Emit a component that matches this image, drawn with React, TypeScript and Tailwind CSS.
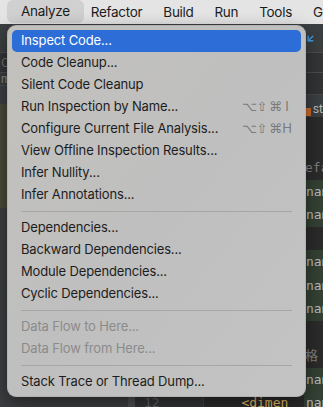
import { ArrowDownLeft } from 'lucide-react';

type Item = { label: string; keys?: string[]; active?: boolean; disabled?: boolean };

// ── Analyze menu contents ────────────────────────────────
const GROUPS: Item[][] = [
  [
    { label: 'Inspect Code...', active: true },
    { label: 'Code Cleanup...' },
    { label: 'Silent Code Cleanup' },
    { label: 'Run Inspection by Name...', keys: ['⌥', '⇧', '⌘', 'I'] },
    { label: 'Configure Current File Analysis...', keys: ['⌥', '⇧', '⌘', 'H'] },
    { label: 'View Offline Inspection Results...' },
    { label: 'Infer Nullity...' },
    { label: 'Infer Annotations...' },
  ],
  [
    { label: 'Dependencies...' },
    { label: 'Backward Dependencies...' },
    { label: 'Module Dependencies...' },
    { label: 'Cyclic Dependencies...' },
  ],
  [
    { label: 'Data Flow to Here...', disabled: true },
    { label: 'Data Flow from Here...', disabled: true },
  ],
  [{ label: 'Stack Trace or Thread Dump...' }],
];

const MENUBAR = ['Refactor', 'Build', 'Run', 'Tools', 'Git'];

// editor lines visible to the right of the menu
const CODE: { pre?: string; text: string; kind: 'comment' | 'attr' | 'blank' }[] = [
  { text: 'efault -->', kind: 'comment' },
  { text: 'name="a"', kind: 'attr' },
  { text: 'name="b"', kind: 'attr' },
  { text: '', kind: 'blank' },
  { text: 'name="c"', kind: 'attr' },
  { text: 'name="d"', kind: 'attr' },
  { text: 'name="e"', kind: 'attr' },
  { text: '', kind: 'blank' },
  { text: '格 -->', kind: 'comment' },
  { text: 'name="f"', kind: 'attr' },
  { pre: '<dimen\u00a0\u00a0', text: 'name="g"', kind: 'attr' },
];

function Shortcut({ keys }: { keys: string[] }) {
  return (
    <div className="flex items-center text-[#7a7a7a] tracking-normal">
      <span className="w-[13px] text-center text-[13px] font-['DejaVu_Sans',sans-serif]">{keys[0]}</span>
      <span className="w-[14px] text-center text-[13px] font-['DejaVu_Sans',sans-serif]">{keys[1]}</span>
      <span className="w-[12px] text-center text-[13px] font-['DejaVu_Sans',sans-serif]">{keys[2]}</span>
      <span className="w-[12px] text-center text-[13px]">{keys[3]}</span>
    </div>
  );
}

function MenuRow({ item }: { item: Item }) {
  return (
    <div
      className={`h-[22px] flex items-center justify-between pl-[9px] pr-[8px] rounded-[5px] text-[13px] tracking-[-0.15px]
        ${item.active ? 'bg-[#2c6dd7] text-white' : item.disabled ? 'text-[#8b8b8b]' : 'text-[#1d1d1d]'}`}
    >
      <span>{item.label}</span>
      {item.keys && <Shortcut keys={item.keys} />}
    </div>
  );
}

export default function App() {
  return (
    <div className="relative w-[323px] h-[407px] overflow-hidden flex flex-col bg-[#2b2b2b] font-['Inter','Liberation_Sans',sans-serif]">
      {/* macOS menu bar */}
      <div className="h-[24px] shrink-0 bg-[#e4e4e4] flex items-center pl-[21px] gap-[21px] text-[13.5px] tracking-[-0.3px] text-[#1c1c1c]">
        <span className="-mx-[14px] px-[14px] h-[23px] self-start flex items-center rounded-[6px] bg-[#d0d0d0]">Analyze</span>
        {MENUBAR.map(m => (
          <span key={m}>{m}</span>
        ))}
      </div>

      {/* IDE toolbar */}
      <div className="h-[29px] shrink-0 bg-[#3c3f41] border-b border-[#4b4d4f] flex items-center justify-end pr-[7px]">
        <ArrowDownLeft className="w-[11px] h-[11px] text-[#3e9ee6]" strokeWidth={3} />
      </div>
      <div className="h-[20px] shrink-0 bg-[#333537] border-b border-[#4b4d4f] flex items-center pl-[1px] text-[12px] text-[#6f7173]">
        C
      </div>

      {/* Workspace */}
      <div className="flex-1 flex min-h-0">
        {/* project panel */}
        <div className="w-[128px] flex flex-col">
          <div className="h-[13px] bg-[#3a3c3e] border-b border-[#4b4d4f] text-[11px] leading-[12px] text-[#8c8e90] pl-[1px]">m</div>
          <div className="h-[18px] bg-[#3c3f41]" />
          <div className="h-[104px] bg-[#4a4939]" />
          <div className="flex-1 bg-[#3c3e41]" />
        </div>
        <div className="w-[7px] bg-[#4d4f51]" />

        {/* gutter */}
        <div className="w-[69px] bg-[#313335] border-r border-[#3f4143] flex flex-col justify-end">
          <div className="h-[16px] pl-[9px] text-[13px] leading-[23px] text-[#606366] font-['DejaVu_Sans_Mono',monospace]">12</div>
        </div>

        {/* editor */}
        <div className="flex-1 flex flex-col min-w-0">
          <div className="h-[22px] shrink-0 bg-[#313335] border-b border-[#45474a]" />
          <div className="h-[22px] shrink-0 bg-[#3c3f41] flex items-end justify-end">
            <div className="w-[17px] h-[16px] flex items-center gap-[2px]">
              <span className="w-[5px] h-[8px] bg-[#cc6a2a] mt-[6px]" />
              <span className="text-[12px] text-[#bbbbbb]">st</span>
            </div>
          </div>
          <div className="flex-1 bg-[#2b2b2b] pt-[39px] font-['DejaVu_Sans_Mono','Noto_Sans_CJK_SC',monospace] text-[13px]">
            {CODE.map((line, i) => (
              <div key={i} className="h-[23.5px] flex items-center whitespace-nowrap">
                <span className="w-[100px] shrink-0 text-right text-[#e8bf6a]">{line.pre ?? ''}</span>
                {line.kind === 'attr' && (
                  <span className="flex-1 h-full flex items-center pl-[2px] bg-[#344134] text-[#bababa]">{line.text}</span>
                )}
                {line.kind === 'comment' && (
                  <span className="flex-1 h-full flex items-center pl-[1px] text-[#808080]">{line.text}</span>
                )}
              </div>
            ))}
          </div>
        </div>
      </div>

      {/* Analyze dropdown */}
      <div className="absolute left-[7px] top-[25px] w-[299px] h-[372px] rounded-[9px] bg-gradient-to-br from-[#c2c1bd] via-[#bfbfbf] to-[#c3c3c3] border border-[#a9a9a9]/60 shadow-[0_6px_18px_rgba(0,0,0,0.45)] px-[4px] pt-[4px]">
        {GROUPS.map((group, gi) => (
          <div key={gi}>
            {gi > 0 && (
              <div className="h-[11px] flex items-center mx-[9px]">
                <div className="w-full h-px bg-[#a6a6a6]" />
              </div>
            )}
            {group.map(item => (
              <MenuRow key={item.label} item={item} />
            ))}
          </div>
        ))}
      </div>
    </div>
  );
}
